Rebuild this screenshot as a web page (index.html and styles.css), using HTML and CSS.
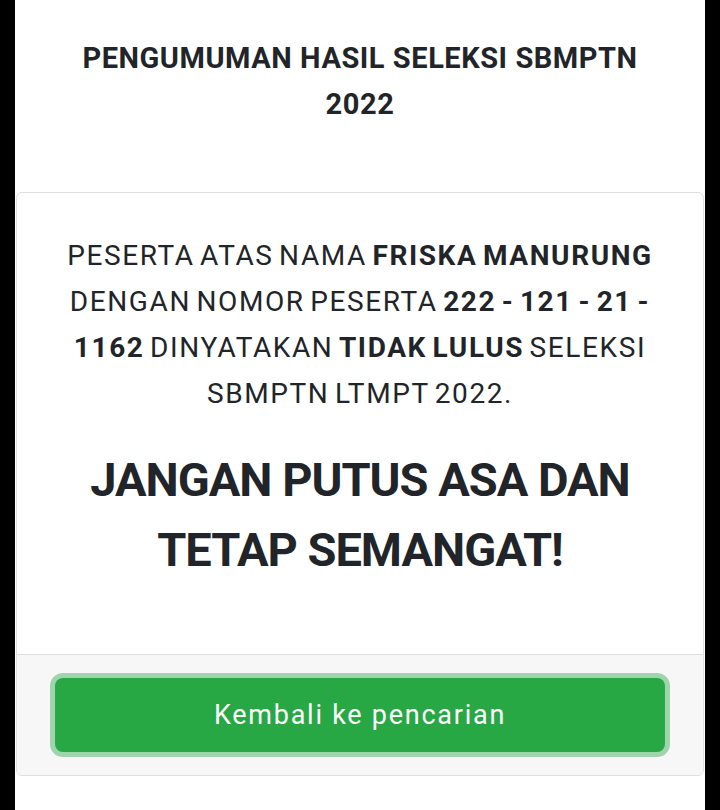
FILE: index.html
```html
<!DOCTYPE html>
<html lang="id">
<head>
  <meta charset="UTF-8">
  <meta name="viewport" content="width=device-width, initial-scale=1.0">
  <title>Pengumuman SBMPTN 2022</title>
  <link rel="stylesheet" href="styles.css">
</head>
<body>
  <div class="page">
    <h1 class="page-title">PENGUMUMAN HASIL SELEKSI SBMPTN 2022</h1>

    <div class="result-card">
      <div class="result-body">
        <p class="result-text">
          PESERTA ATAS NAMA <b>FRISKA MANURUNG</b> DENGAN NOMOR PESERTA <b>222 - 121 - 21 - 1162</b> DINYATAKAN <b>TIDAK LULUS</b> SELEKSI SBMPTN LTMPT 2022.
        </p>
        <h2 class="result-motto">JANGAN PUTUS ASA DAN TETAP SEMANGAT!</h2>
      </div>
      <div class="result-footer">
        <button type="button" class="btn-back">Kembali ke pencarian</button>
      </div>
    </div>
  </div>
</body>
</html>
```

FILE: styles.css
```css
body {
  margin: 0;
  background: #000;
  font-family: Roboto, "Liberation Sans", Arial, sans-serif;
  color: #212529;
}

.page {
  width: 690px;
  height: 810px;
  margin: 0 auto;
  background: #fff;
  padding: 35px 1px 0 1px;
  box-sizing: border-box;
}

.page-title {
  margin: 0 0 65px 0;
  padding: 0 50px;
  font-size: 29px;
  font-weight: 700;
  letter-spacing: 0.55px;
  line-height: 46px;
  text-align: center;
}

.result-card {
  border: 1px solid #dfdfdf;
  border-radius: 6px;
  overflow: hidden;
}

.result-body {
  padding: 40px 44px 69px 44px;
  text-align: center;
}

.result-text {
  margin: 0 0 28px 0;
  font-size: 28px;
  letter-spacing: 1.6px;
  word-spacing: -3px;
  line-height: 46px;
}

.result-text b {
  font-weight: 700;
}

.result-motto {
  margin: 0 -20px;
  font-size: 47px;
  font-weight: 700;
  letter-spacing: -1px;
  line-height: 70px;
}

.result-footer {
  background: #f7f7f7;
  border-top: 1px solid #dfdfdf;
  padding: 23px 38px;
}

.btn-back {
  display: block;
  width: 100%;
  height: 74px;
  border: none;
  border-radius: 8px;
  background: #28a745;
  color: #fff;
  font-family: Roboto, "Liberation Sans", Arial, sans-serif;
  font-size: 27px;
  letter-spacing: 1.75px;
  box-shadow: 0 0 0 5px rgba(72, 180, 97, 0.5);
  cursor: pointer;
}
```
